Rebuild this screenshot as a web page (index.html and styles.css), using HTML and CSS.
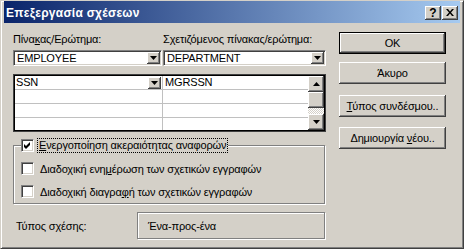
FILE: index.html
```html
<!DOCTYPE html>
<html lang="el">
<head>
<meta charset="utf-8">
<title>Επεξεργασία σχέσεων</title>
<link rel="stylesheet" href="styles.css">
</head>
<body>
<div class="window">
  <div class="titlebar">
    <span class="title">Επεξεργασία σχέσεων</span>
    <div class="tbtns">
      <span class="tbtn help">?</span>
      <span class="tbtn close"><svg width="8" height="7" viewBox="0 0 8 7"><polygon points="0,0 2,0 4,2.5 6,0 8,0 5,3.5 8,7 6,7 4,4.5 2,7 0,7 3,3.5" fill="#000"/></svg></span>
    </div>
  </div>
  <div class="content">
    <div class="left">
      <div class="labels">
        <span class="lab1">Πίνα<u>κ</u>ας/Ερώτημα:</span>
        <span class="lab2">Σ<u>χ</u>ετιζόμενος πίνακας/ερώτημα:</span>
      </div>
      <div class="combos">
        <div class="combo c1"><span class="val">EMPLOYEE</span><span class="ddbtn"><svg width="7" height="4" viewBox="0 0 7 4"><polygon points="0,0 7,0 3.5,4" fill="#000"/></svg></span></div>
        <div class="combo c2"><span class="val">DEPARTMENT</span><span class="ddbtn"><svg width="7" height="4" viewBox="0 0 7 4"><polygon points="0,0 7,0 3.5,4" fill="#000"/></svg></span></div>
      </div>
      <div class="grid">
        <div class="col col1">
          <div class="row"><span>SSN</span><span class="ddbtn"><svg width="7" height="4" viewBox="0 0 7 4"><polygon points="0,0 7,0 3.5,4" fill="#000"/></svg></span></div>
          <div class="row"></div>
          <div class="row"></div>
          <div class="row"></div>
        </div>
        <div class="col col2">
          <div class="row"><span>MGRSSN</span></div>
          <div class="row"></div>
          <div class="row"></div>
          <div class="row"></div>
        </div>
        <div class="vscroll">
          <div class="sbtn"><svg width="7" height="4" viewBox="0 0 7 4"><polygon points="0,4 7,4 3.5,0" fill="#000"/></svg></div>
          <div class="thumb"></div>
          <div class="track"></div>
          <div class="sbtn"><svg width="7" height="4" viewBox="0 0 7 4"><polygon points="0,0 7,0 3.5,4" fill="#000"/></svg></div>
        </div>
      </div>
      <fieldset class="group">
        <legend class="legend">
          <span class="chk"><svg width="7" height="7" viewBox="0 0 7 7"><polygon points="0,2 2,4 6,0 6,3 2,7 0,5" fill="#000"/></svg></span>
          <span class="focus"><u>Ε</u>νεργοποίηση ακεραιότητας αναφορών</span>
        </legend>
        <div class="chkrow first"><span class="chk"></span><span class="chklbl">Διαδοχική ενη<u>μ</u>έρωση των σχετικών εγγραφών</span></div>
        <div class="chkrow"><span class="chk"></span><span class="chklbl">Διαδοχική διαγρα<u>φ</u>ή των σχετικών εγγραφών</span></div>
      </fieldset>
      <div class="reltype">
        <span class="rellbl">Τύπος σχέσης:</span>
        <div class="relbox">Ένα-προς-ένα</div>
      </div>
    </div>
    <div class="buttons">
      <div class="btn def">OK</div>
      <div class="btn b2">Άκυρο</div>
      <div class="btn b3"><span><u>Τ</u>ύπος συνδέσμου..</span></div>
      <div class="btn b4"><span>Δημιουργία <u>ν</u>έου..</span></div>
    </div>
  </div>
</div>
</body>
</html>
```
FILE: styles.css
```css
* { box-sizing: border-box; }
html, body { margin: 0; padding: 0; }
body {
  width: 464px;
  height: 249px;
  overflow: hidden;
  background: #d4d0c8;
  font-family: "Liberation Sans", Arial, sans-serif;
  font-size: 11px;
  letter-spacing: -0.15px;
  color: #000;
}
u { text-underline-offset: 1px; }

.window {
  width: 464px;
  height: 249px;
  background: #d4d0c8;
  border: 1px solid #d4d0c8;
  border-right-color: #404040;
  border-bottom-color: #404040;
  box-shadow: inset 1px 1px 0 #fff, inset -1px -1px 0 #808080;
  padding: 0 3px 3px 3px;
  display: flex;
  flex-direction: column;
}

.titlebar {
  height: 22px;
  flex: none;
  background: linear-gradient(to right, #0a246a, #a6caf0);
  display: flex;
  justify-content: space-between;
  align-items: flex-start;
  padding: 0 2px 0 2px;
}
.title {
  color: #fff;
  font-weight: bold;
  font-size: 12px;
  letter-spacing: 0.25px;
  line-height: 16px;
  margin-top: 4px;
}
.tbtns {
  display: flex;
  gap: 1px;
  margin-top: 5px;
}
.tbtn {
  width: 16px;
  height: 14px;
  background: #d4d0c8;
  box-shadow: inset -1px -1px 0 #404040, inset 1px 1px 0 #fff, inset -2px -2px 0 #808080;
  display: flex;
  align-items: center;
  justify-content: center;
}
.help {
  font-weight: bold;
  font-size: 12px;
  line-height: 12px;
  letter-spacing: 0;
  padding-bottom: 1px;
}
.close svg { display: block; margin-top: -1px; }

.content {
  flex: 1;
  display: flex;
  padding: 9px 0 0 9px;
}

.left {
  width: 313px;
  padding-top: 1px;
  display: flex;
  flex-direction: column;
}

.labels {
  display: flex;
  height: 13px;
  line-height: 13px;
}
.lab1 { width: 150px; }

.combos {
  display: flex;
  height: 16px;
  margin-top: 4px;
}
.combo {
  height: 16px;
  background: #fff;
  border: 1px solid;
  border-color: #808080 #fff #fff #808080;
  box-shadow: inset 1px 1px 0 #404040, inset -1px -1px 0 #d4d0c8;
  padding: 1px;
  display: flex;
  align-items: center;
}
.c1 { width: 149px; margin-right: 1px; }
.c2 { flex: 1; }
.val {
  flex: 1;
  padding-left: 2px;
  line-height: 12px;
}

.ddbtn {
  width: 13px;
  height: 12px;
  flex: none;
  background: #d4d0c8;
  box-shadow: inset -1px -1px 0 #404040, inset 1px 1px 0 #fff, inset -2px -2px 0 #808080;
  display: flex;
  align-items: center;
  justify-content: center;
}
.ddbtn svg, .sbtn svg { display: block; }

.grid {
  margin-top: 8px;
  height: 58px;
  display: flex;
  background: #fff;
  border: 1px solid #404040;
  box-shadow: inset 0 0 0 1px #000;
  padding: 1px;
}
.col {
  height: 54px;
  overflow: hidden;
}
.col1 { width: 148px; border-right: 1px solid #c0c0c0; }
.col2 { width: 145px; }
.row {
  height: 14px;
  border-bottom: 1px solid #c0c0c0;
  display: flex;
  align-items: center;
  line-height: 13px;
}
.col1 .row { padding-left: 1px; }
.col2 .row { padding-left: 2px; }
.row .ddbtn { margin-left: auto; margin-right: 1px; }

.vscroll {
  width: 16px;
  height: 54px;
  display: flex;
  flex-direction: column;
}
.sbtn, .thumb {
  height: 16px;
  background: #d4d0c8;
  box-shadow: inset -1px -1px 0 #404040, inset 1px 1px 0 #fff, inset -2px -2px 0 #808080;
  display: flex;
  align-items: center;
  justify-content: center;
}
.track {
  height: 6px;
  background: repeating-conic-gradient(#fff 0 25%, #d4d0c8 0 50%) 0 0 / 2px 2px;
}

.group {
  margin: 5px 1px 0 0;
  padding: 0 0 0 7px;
  border: 1px solid #808080;
  box-shadow: inset 1px 1px 0 #fff, 1px 1px 0 #fff;
  min-width: 0;
}
.legend {
  padding: 0;
  height: 16px;
  display: flex;
  align-items: center;
  background: #d4d0c8;
}
.focus {
  margin-left: 3px;
  padding: 0 1px;
  border: 1px dotted #000;
  line-height: 13px;
}
.chk {
  width: 13px;
  height: 13px;
  flex: none;
  background: #fff;
  border: 1px solid;
  border-color: #808080 #fff #fff #808080;
  box-shadow: inset 1px 1px 0 #404040, inset -1px -1px 0 #d4d0c8;
  display: flex;
  align-items: center;
  justify-content: center;
}
.chk svg { display: block; }
.chkrow {
  height: 23px;
  display: flex;
  align-items: center;
}
.chkrow.first { margin-top: 4px; }
.chklbl { margin-left: 6px; }

.reltype {
  display: flex;
  align-items: center;
  height: 27px;
  margin-top: 8px;
}
.rellbl {
  width: 124px;
  padding-left: 3px;
}
.relbox {
  width: 188px;
  height: 27px;
  border: 1px solid #808080;
  box-shadow: inset 1px 1px 0 #fff, 1px 1px 0 #fff;
  padding-left: 10px;
  display: flex;
  align-items: center;
}

.buttons {
  width: 107px;
  margin-left: 13px;
  display: flex;
  flex-direction: column;
}
.btn {
  height: 22px;
  background: #d4d0c8;
  box-shadow: inset -1px -1px 0 #404040, inset 1px 1px 0 #fff, inset -2px -2px 0 #808080;
  display: flex;
  align-items: center;
  justify-content: center;
}
.btn.def { border: 1px solid #000; }
.b2 { margin-top: 8px; }
.b3 { margin-top: 11px; }
.b4 { margin-top: 10px; }
```
